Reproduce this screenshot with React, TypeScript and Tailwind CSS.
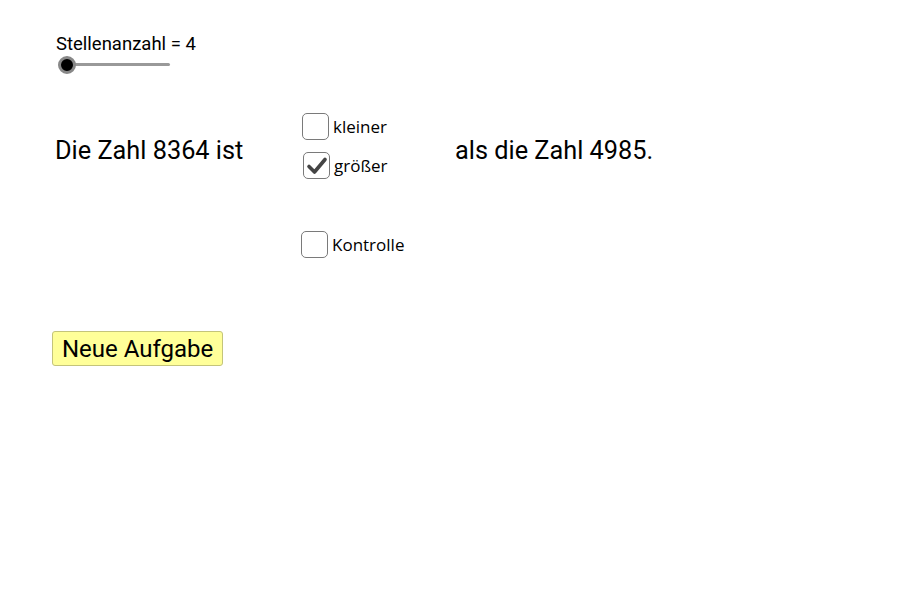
import React from "react";

function Box({ checked }: { checked?: boolean }) {
  return (
    <div className="w-[27px] h-[27px] rounded-[5px] border-[1.5px] border-[#7a7a7a] bg-white flex items-center justify-center shrink-0">
      {checked && (
        <svg width="22" height="20" viewBox="0 0 22 20">
          <path d="M3 10.5 L8.5 16 L19 3.5" fill="none" stroke="#444" strokeWidth="3.6" strokeLinecap="round" strokeLinejoin="round" />
        </svg>
      )}
    </div>
  );
}

export default function App() {
  return (
    <div className="w-[900px] h-[600px] bg-white text-black pl-[52px] pt-[33px]" style={{ fontFamily: "Roboto, sans-serif" }}>
      <div className="pl-[4px]">
        <div className="text-[18.5px] leading-[22px]">Stellenanzahl = 4</div>
        <div className="relative w-[120px] h-[18px] mt-[1px]">
          <div className="absolute left-[11px] top-[7px] w-[103px] h-[3px] bg-[#999999] rounded-full" />
          <div className="absolute left-[2px] top-0 w-[18px] h-[18px] rounded-full bg-black border-[3px] border-[#888888]" />
        </div>
      </div>
      <div className="flex mt-[39px]">
        <div className="w-[250px] pl-[3px] pt-[24px] text-[25.3px] leading-[28px]">Die Zahl 8364 ist</div>
        <div className="w-[153px] flex flex-col" style={{ fontFamily: "'Open Sans', sans-serif" }}>
          <div className="flex items-center gap-[4px] h-[27px] text-[17px]">
            <Box />
            <span>kleiner</span>
          </div>
          <div className="flex items-center gap-[4px] h-[27px] mt-[12px] ml-[1px] text-[17px]">
            <Box checked />
            <span>größer</span>
          </div>
          <div className="flex items-center gap-[4px] h-[27px] mt-[52px] -ml-[1px] text-[17px]">
            <Box />
            <span>Kontrolle</span>
          </div>
        </div>
        <div className="pt-[24px] text-[25.3px] leading-[28px]">als die Zahl 4985.</div>
      </div>
      <div className="mt-[73px]">
        <button className="h-[35px] px-[9px] bg-[#ffff99] border border-[#c4c47a] rounded-[3px] text-[24px] leading-[28px] text-black" style={{ fontFamily: "Roboto, sans-serif" }}>
          Neue Aufgabe
        </button>
      </div>
    </div>
  );
}
